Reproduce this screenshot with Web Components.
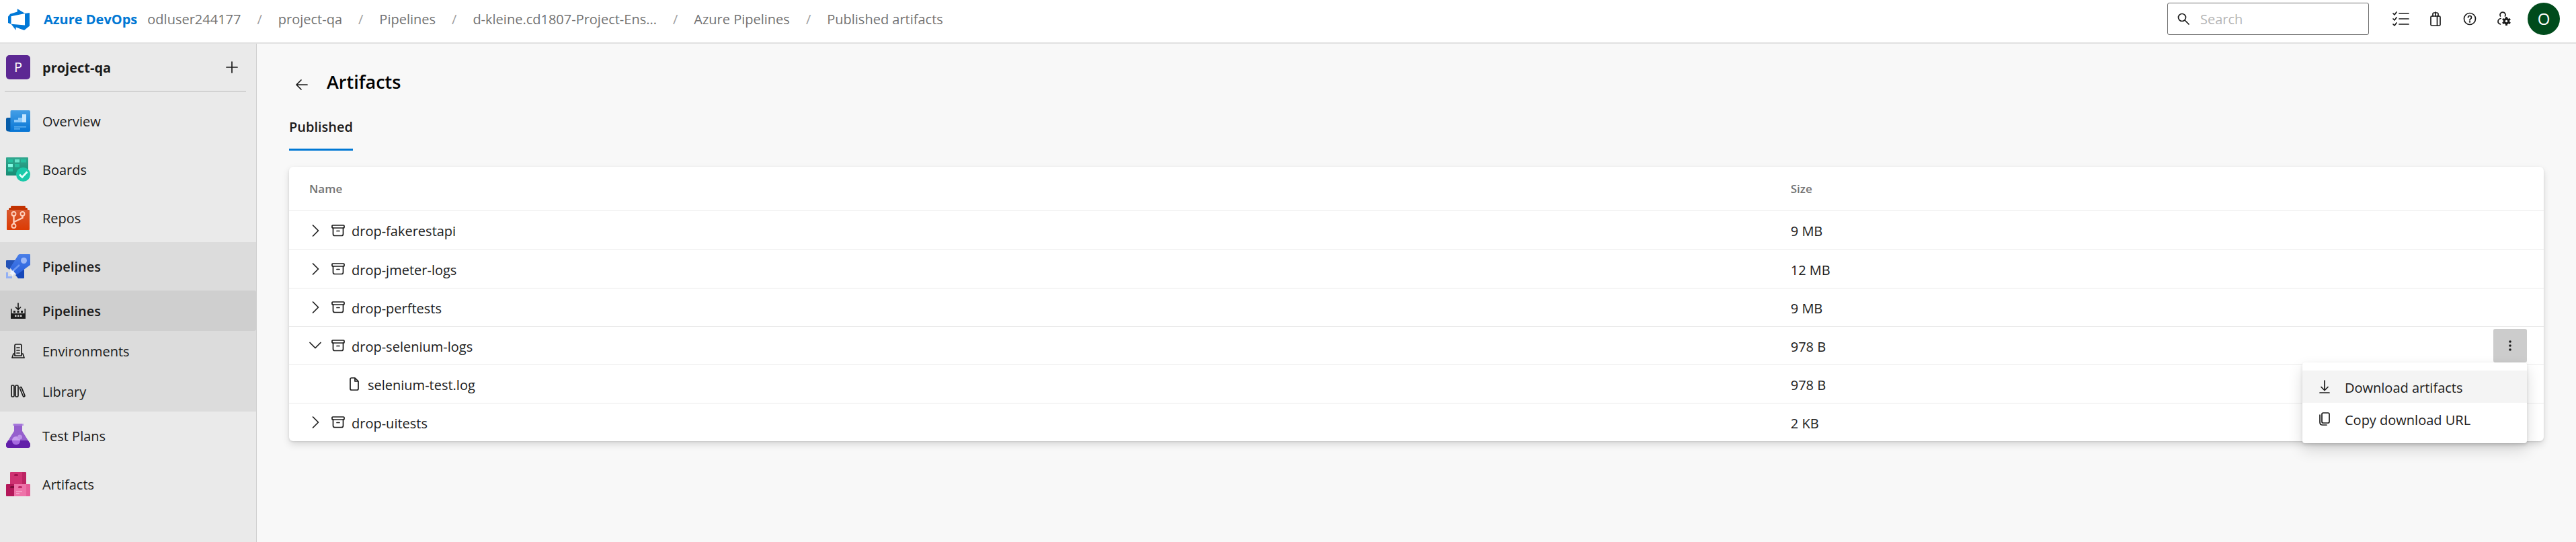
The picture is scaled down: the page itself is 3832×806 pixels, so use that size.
<!DOCTYPE html>
<html lang="en">
<head>
<meta charset="utf-8">
<title>Artifacts - Pipelines</title>
<style>
html,body{margin:0}
body{font:400 20px/28px "Open Sans","Noto Sans",sans-serif;color:#1b1b1b;background:#f8f8f8}
</style>
</head>
<body>
<ad-shell>
  <ad-topbar slot="top">
    <ad-crumb>odluser244177</ad-crumb>
    <ad-crumb>project-qa</ad-crumb>
    <ad-crumb>Pipelines</ad-crumb>
    <ad-crumb>d-kleine.cd1807-Project-Ens...</ad-crumb>
    <ad-crumb>Azure Pipelines</ad-crumb>
    <ad-crumb>Published artifacts</ad-crumb>
  </ad-topbar>
  <ad-sidebar slot="side">
    <span slot="project">project-qa</span>
    <ad-nav-item icon="overview">Overview</ad-nav-item>
    <ad-nav-item icon="boards">Boards</ad-nav-item>
    <ad-nav-item icon="repos">Repos</ad-nav-item>
    <ad-nav-group>
      <ad-nav-item icon="pipelines" strong>Pipelines</ad-nav-item>
      <ad-nav-item icon="build" sub strong current>Pipelines</ad-nav-item>
      <ad-nav-item icon="environments" sub>Environments</ad-nav-item>
      <ad-nav-item icon="library" sub>Library</ad-nav-item>
    </ad-nav-group>
    <ad-nav-item icon="testplans">Test Plans</ad-nav-item>
    <ad-nav-item icon="artifacts">Artifacts</ad-nav-item>
  </ad-sidebar>
  <ad-page>
    <span slot="title">Artifacts</span>
    <span slot="tab">Published</span>
    <ad-artifact-table></ad-artifact-table>
  </ad-page>
</ad-shell>

<script>
const reset = `*{box-sizing:border-box}
a{color:inherit;text-decoration:none}
button{font:inherit;color:inherit;background:none;border:0;padding:0;margin:0;display:flex;align-items:center;justify-content:center;cursor:pointer}`;

function define(name, css, html, setup) {
  const template = document.createElement('template');
  template.innerHTML = `<style>${reset}${css}</style>${html}`;
  customElements.define(name, class extends HTMLElement {
    constructor() {
      super();
      this.attachShadow({ mode: 'open' }).append(template.content.cloneNode(true));
    }
    connectedCallback() { if (setup) setup(this, this.shadowRoot); }
  });
}

const line = 'fill="none" stroke="#1b1b1b" stroke-width="1.7" stroke-linecap="round" stroke-linejoin="round"';
/* name: [width, height, markup] */
const icons = {
  logo: [36, 36, `<path transform="scale(2)" fill="#0078d7" d="M17 4v9.740l-4 3.280-6.200-2.260V17l-3.510-4.590 10.230.8V4.440zm-3.410.490L7.850 1v2.290L2.580 4.840 1 6.870v4.610l2.260 1V6.570z"/>`],
  overview: [36, 36, `<defs><linearGradient id="a" x2="0" y2="1"><stop stop-color="#459fe6"/><stop offset="1" stop-color="#0574d4"/></linearGradient></defs><path fill="#075ca8" d="M2 13h8v20.5H3.500a3.500 3.500 0 0 1-3.500-3.500V15q0-2 2-2Z"/><path fill="url(#a)" d="M8 2h26q2 0 2 2v28q0 2-2 2H4q2.500-.5 2.500-4V4Q6.500 2 8 2Z"/><path fill="#8cc9fa" d="M12 16h6v-3h6V8h6v12H12Z"/><path fill="#c5e6ff" d="M24 8h6v12h-6z"/><path fill="#67b5f2" d="M12 26h18v1.500H12zM12 29h9v1.500h-9z"/>`],
  boards: [36, 36, `<defs><linearGradient id="a" x2="0" y2="1"><stop stop-color="#33a78f"/><stop offset="1" stop-color="#178d75"/></linearGradient></defs><path fill="url(#a)" d="M1 0h31q1 0 1 1v26H1q-1 0-1-1V1q0-1 1-1Z"/><path fill="#25c09f" d="M3 3h7v4.500H3zM22 3h8v4.500h-8zM13 10h7v4.500h-7zM3 16.500h7V21H3z"/><path fill="#67e4cb" d="M13 3h7v4.500h-7z"/><path fill="#85fce5" d="M3 10h7v4.500H3z"/><circle cx="25.500" cy="25.500" r="10.500" fill="#1ac9a9"/><path d="m20 25.500 4 4 7.500-8" fill="none" stroke="#e3fff9" stroke-width="2.800"/>`],
  repos: [36, 36, `<defs><linearGradient id="a" x2="0" y2="1"><stop stop-color="#d85930"/><stop offset="1" stop-color="#dc3b03"/></linearGradient></defs><path fill="#c23200" d="M8 0h20q1 0 1 3h2q1 0 1 4H4q0-4 1-4h2q0-3 1-3Z"/><path fill="url(#a)" d="M2 6h32q1 0 1 1v28q0 1-1 1H2q-1 0-1-1V7q0-1 1-1Z"/><g fill="none" stroke="#ffd0bd" stroke-width="1.800"><path stroke-width="2.400" d="M11.500 15v12M24.500 15v3L12 24"/><circle cx="11.500" cy="12" r="3"/><circle cx="24.500" cy="12" r="3"/><circle cx="11.500" cy="30" r="3"/></g>`],
  pipelines: [36, 36, `<defs><linearGradient id="a" x2="0" y2="1"><stop stop-color="#497ee7"/><stop offset="1" stop-color="#2860dd"/></linearGradient></defs><path fill="#2453b7" d="M1 9h13L5 23l-5-4V10q0-1 1-1Z"/><path fill="#1547b9" d="M27 22v13q0 1-1 1h-8l-4-5Z"/><path fill="url(#a)" d="M20 0h15q1 0 1 1v15L16 30.500 6 20.500 17 3q1.500-3 3-3Z"/><circle cx="26.500" cy="9.500" r="4.500" fill="#9db8f6"/><path stroke="#6b97f1" stroke-width="2.500" d="m9 26 11-10"/><path fill="#eef3ff" d="m6 23 3 2 2-1 1 3 2 2-3 1-1 3-2-3-3-1 2-2Z"/><path fill="#93b0f4" d="M0 27h3v6h6v3H0z"/>`],
  testplans: [36, 36, `<defs><clipPath id="c"><path d="M12 0h12v11l12 19q1 6-4 6H4q-5 0-4-6l12-19Z"/></clipPath></defs><g clip-path="url(#c)"><path fill="#955fcd" d="M0 0h36v36H0z"/><path fill="#621fa9" d="M0 25h36v11H0z"/><circle cx="15" cy="25.500" r="6" fill="#a66ae0"/><path fill="#c79eee" d="M9 25a6 6 0 0 1 12 0Z"/><circle cx="20.500" cy="20" r="3.500" fill="#bd91e8"/></g><path fill="#b89adf" d="M10 0h16v3H10z"/><path fill="#a678db" d="M12 0h12v3H12z"/>`],
  artifacts: [36, 36, `<path fill="#cf3272" d="M7 0h17v18H6V1q0-1 1-1Z"/><path fill="#bc2463" d="M24 0h5q1 0 1 1v17h-6z"/><path fill="#b4185a" d="M1 18h11v18H1q-1 0-1-1V19q0-1 1-1Z"/><path fill="#ee73a9" d="M12 18h18v18H12z"/><path fill="#e65c98" d="M30 18h5q1 0 1 1v16q0 1-1 1h-5z"/><rect x="12" y="3" width="6" height="3" rx="1.500" fill="#a0134e"/><path fill="#7e0b3b" d="M7.500 21H12v3H7.500a1.500 1.500 0 0 1 0-3Z"/><rect x="18" y="21" width="6" height="3" rx="1.500" fill="#bf2566"/><path fill="#f7a5cb" d="M15 28h9v1.500h-9zM15 31h5v1.500h-5z"/>`],
  build: [22, 24, `<path ${line} d="M11 1v9M7.500 7l3.500 3.500L14.500 7"/><path fill="#1b1b1b" d="M0 9h1.500v7H22v8H0zM20.500 9H22v8h-1.500zM4 12h3v3H4zM9.500 12h3v3h-3zM15 12h3v3h-3z"/><path fill="#cfcfcf" d="M6 18.500h2.500V21H6zM10 18.500h2.500V21H10zM14 18.500h2.500V21H14z"/>`],
  environments: [20, 22, `<path ${line} d="M5 18V3q0-2 2-2h6q2 0 2 2v15M5 15H3l-2 6h18l-2-6h-2M5 18h10M8 6h4M8 10h4M8 14h4"/>`],
  library: [22, 20, `<g ${line}><rect x="1" y="1" width="4" height="17" rx="1.500"/><rect x="7" y="1" width="4" height="17" rx="1.500"/><path d="M13.500 5.500q-.5-1.300.8-1.700 1.300-.4 1.800.8l4.800 11.500q.4 1.300-.8 1.700-1.300.5-1.800-.8Z"/></g>`],
  plus: [18, 18, `<path ${line} d="M9 1v16M1 9h16"/>`],
  back: [18, 24, `<path ${line} d="M17 16H1M8 9l-7 7 7 7"/>`],
  search: [18, 18, `<path ${line} d="M11 11l6 6"/><circle cx="7" cy="7" r="5.500" ${line}/>`],
  tasks: [25, 22, `<path ${line} d="m1 3 2 2 3-4M1 11l2 2 3-4M1 19l2 2 3-4M10 3h14M10 11h14M10 19h14"/>`],
  market: [16, 22, `<g ${line}><rect x="1" y="7" width="14" height="14" rx="1.500"/><path d="M4 7V4q0-2 2-2h4q2 0 2 2v3M8 1v6M10.500 7v14"/></g>`],
  help: [20, 20, `<circle cx="10" cy="10" r="8.500" ${line}/><path ${line} d="M7.500 8q0-2.500 2.500-2.500T12.500 8q0 1.500-1.500 2.200-1 .6-1 1.800"/><circle cx="10" cy="14.500" r="1.200" fill="#1b1b1b"/>`],
  settings: [20, 22, `<path ${line} d="M4.500 7A4 4 0 1 1 11.500 7M5 10.500q-4 1-4 4.500 0 3 3.500 4"/><g fill="#1b1b1b"><circle cx="13.500" cy="14.500" r="4.800"/><path id="t" d="M12 8h3v13h-3z"/><path transform="rotate(60 13.500 14.500)" d="M12 8h3v13h-3z"/><path transform="rotate(120 13.500 14.500)" d="M12 8h3v13h-3z"/></g><circle cx="13.500" cy="14.500" r="1.700" fill="#fff"/>`],
  right: [18, 18, `<path ${line} d="m5.500 1 8 8-8 8"/>`],
  down: [18, 18, `<path ${line} d="m1 4.500 8 8 8-8"/>`],
  box: [20, 18, `<g ${line}><rect x="1" y="1" width="18" height="4" rx="1"/><path d="M2.500 5v9q0 2.500 2.500 2.500h10q2.500 0 2.500-2.500V5M8 9.500h4"/></g>`],
  file: [14, 20, `<path ${line} d="M1 3q0-2 2-2h5l5 5v11q0 2-2 2H3q-2 0-2-2ZM8 1v5h5"/>`],
  download: [16, 20, `<path ${line} d="M8 1v14M3 10.500l5 5 5-5M1 19h14"/>`],
  copy: [16, 20, `<g ${line}><rect x="4" y="1" width="11" height="15" rx="2"/><path d="M1 4v11q0 4 4 4h6"/></g>`],
  more: [6, 18, `<g fill="#1b1b1b"><circle cx="3" cy="3" r="1.800"/><circle cx="3" cy="9" r="1.800"/><circle cx="3" cy="15" r="1.800"/></g>`]
};

define('ad-icon', `:host{display:inline-flex;flex:none}svg{display:block;overflow:visible}`, '', (host, root) => {
  const [w, h, body] = icons[host.getAttribute('name')];
  root.querySelector('svg')?.remove();
  root.querySelector('style').insertAdjacentHTML('afterend',
    `<svg xmlns="http://www.w3.org/2000/svg" width="${w}" height="${h}" viewBox="0 0 ${w} ${h}" aria-hidden="true">${body}</svg>`);
});

define('ad-shell', `
:host{display:grid;grid-template:auto 1fr / 382px minmax(0,1fr);min-height:100vh}
slot{display:block}
slot[name=top]{grid-column:1 / -1}
slot[name=side]{display:grid}`,
`<slot name="top"></slot><slot name="side"></slot><slot></slot>`);

define('ad-crumb', `
:host{display:flex;color:#737373;white-space:nowrap}
:host(:not(:first-of-type))::before{content:"/";padding:0 24px;color:#a0a0a0}`,
`<a href="#"><slot></slot></a>`);

define('ad-topbar', `
:host{display:block;background:#fff;border-bottom:2px solid #e1e1e1}
header{display:flex;align-items:center;height:63px;padding:0 24px 8px 10px}
.brand{display:flex;align-items:center;gap:19px;font-weight:700;color:#0078d4;margin-right:15px;white-space:nowrap}
nav{display:flex;flex:1;min-width:0}
.brand,nav{padding-top:2px}
label{display:flex;align-items:center;width:300px;height:48px;border:1px solid #6a6a6a;border-radius:3px;padding:0 14px;gap:16px;margin-right:22px}
input{font:inherit;border:0;outline:0;background:none;padding:2px 0 0;min-width:0;flex:1}
input::placeholder{color:#b5b5b5;opacity:1}
.tool{width:51px;height:48px}
.avatar{width:48px;height:48px;border-radius:50%;background:#004b1c;color:#fff;font-size:24px;margin-left:10px}`,
`<header>
<a class="brand" href="#"><ad-icon name="logo"></ad-icon>Azure DevOps</a>
<nav aria-label="Breadcrumb"><slot></slot></nav>
<label aria-label="Search"><ad-icon name="search"></ad-icon><input type="text" placeholder="Search"></label>
<button class="tool" aria-label="Work items"><ad-icon name="tasks"></ad-icon></button>
<button class="tool" aria-label="Marketplace"><ad-icon name="market"></ad-icon></button>
<button class="tool" aria-label="Help"><ad-icon name="help"></ad-icon></button>
<button class="tool" aria-label="User settings"><ad-icon name="settings"></ad-icon></button>
<button class="avatar">O</button>
</header>`);

define('ad-sidebar', `
:host{display:block;background:#eaeaea;border-right:1px solid #cfcfcf}
.project{display:flex;align-items:center;height:72px;margin:0 15px 7px 7px;padding:0 12px 0 2px;border-bottom:2px solid #d2d2d2}
.badge{width:36px;height:36px;border-radius:5px;background:#5c2893;color:#fff;display:flex;align-items:center;justify-content:center;margin-right:18px}
.name{flex:1;font-weight:700;padding-top:2px}`,
`<div class="project"><span class="badge">P</span><a class="name" href="#"><slot name="project"></slot></a>
<button aria-label="Create"><ad-icon name="plus"></ad-icon></button></div>
<nav aria-label="Project"><slot></slot></nav>`);

define('ad-nav-group', `:host{display:block;background:#dcdcdc}`, `<slot></slot>`);

define('ad-nav-item', `
:host{display:block}
a{display:flex;align-items:center;gap:18px;height:72px;padding-left:9px}
.icon{display:flex;justify-content:center;width:36px}
.text{padding-top:2px}
:host([sub]) a{height:60px}
:host([strong]) a{font-weight:600}
:host([current]) a{background:#cfcfcf;border-radius:0 3px 3px 0}`,
`<a href="#"><span class="icon"></span><span class="text"><slot></slot></span></a>`, (host, root) => {
  const icon = document.createElement('ad-icon');
  icon.setAttribute('name', host.getAttribute('icon'));
  root.querySelector('.icon').replaceChildren(icon);
});

define('ad-page', `
:host{display:block;padding:33px 48px 48px}
.head{display:flex;align-items:center;height:48px;margin-bottom:11px}
.back{width:38px;height:48px;margin-right:18px}
h1{margin:0;font-size:27px;line-height:36px;font-weight:600;color:#000}
.tabs{display:flex;margin-bottom:24px}
.tab{height:67px;font-weight:600;border-bottom:3px solid #0078d4}`,
`<div class="head"><button class="back" aria-label="Back"><ad-icon name="back"></ad-icon></button><h1><slot name="title"></slot></h1></div>
<div class="tabs" role="tablist"><button class="tab" role="tab" aria-selected="true"><slot name="tab"></slot></button></div>
<slot></slot>`);

define('ad-menu', `
:host{display:block;width:334px;padding:12px 0;background:#fff;border-radius:4px;box-shadow:0 10px 22px rgba(0,0,0,.14),0 2px 5px rgba(0,0,0,.12)}
button{width:100%;height:48px;justify-content:flex-start;gap:22px;padding:0 25px}
button:first-of-type{background:#f4f4f4}
span{padding-top:4px}`,
`<button role="menuitem"><ad-icon name="download"></ad-icon><span>Download artifacts</span></button>
<button role="menuitem"><ad-icon name="copy"></ad-icon><span>Copy download URL</span></button>`);

const rows = [
  ['drop-fakerestapi', '9 MB', 'right'],
  ['drop-jmeter-logs', '12 MB', 'right'],
  ['drop-perftests', '9 MB', 'right'],
  ['drop-selenium-logs', '978 B', 'down'],
  ['selenium-test.log', '978 B', 'file'],
  ['drop-uitests', '2 KB', 'right']
];
const nameCell = (name, kind) => kind === 'file'
  ? `<div class="name child"><ad-icon name="file"></ad-icon><span>${name}</span></div>`
  : `<div class="name"><button aria-label="Toggle ${name}"><ad-icon name="${kind}"></ad-icon></button><ad-icon name="box"></ad-icon><span>${name}</span></div>`;
const actions = `<div class="actions"><button class="more" aria-label="More options"><ad-icon name="more"></ad-icon></button><ad-menu role="menu"></ad-menu></div>`;

define('ad-artifact-table', `
:host{display:block;background:#fff;border-radius:6px;box-shadow:0 5px 11px rgba(0,0,0,.13),0 1px 3px rgba(0,0,0,.11)}
table{width:100%;table-layout:fixed;border-collapse:separate;border-spacing:0}
th,td{padding:0;text-align:left;vertical-align:middle}
th{height:66px;font-size:17px;font-weight:600;color:#737373;border-bottom:1px solid #eaeaea}
td{height:57px}
tr + tr td{border-top:1px solid #eaeaea}
th:first-child,td:first-child{width:66.6%;padding-left:30px}
th:last-child,td:last-child{width:400px;padding-right:25px}
td:nth-child(2),.name span{padding-top:3px}
.name{display:flex;align-items:center}
.name button{margin-right:15px}
.name ad-icon + span{margin-left:10px}
.name.child{padding-left:60px}
.name.child ad-icon + span{margin-left:13px}
.actions{position:relative;display:flex;justify-content:flex-end}
.more{width:50px;height:50px;background:#ccc;border-radius:3px}
ad-menu{position:absolute;top:100%;right:0;z-index:1}`,
`<table>
<thead><tr><th scope="col">Name</th><th scope="col">Size</th><th></th></tr></thead>
<tbody>${rows.map(([name, size, kind]) => `<tr><td>${nameCell(name, kind)}</td><td>${size}</td><td>${kind === 'down' ? actions : ''}</td></tr>`).join('')}</tbody>
</table>`);
</script>
</body>
</html>
